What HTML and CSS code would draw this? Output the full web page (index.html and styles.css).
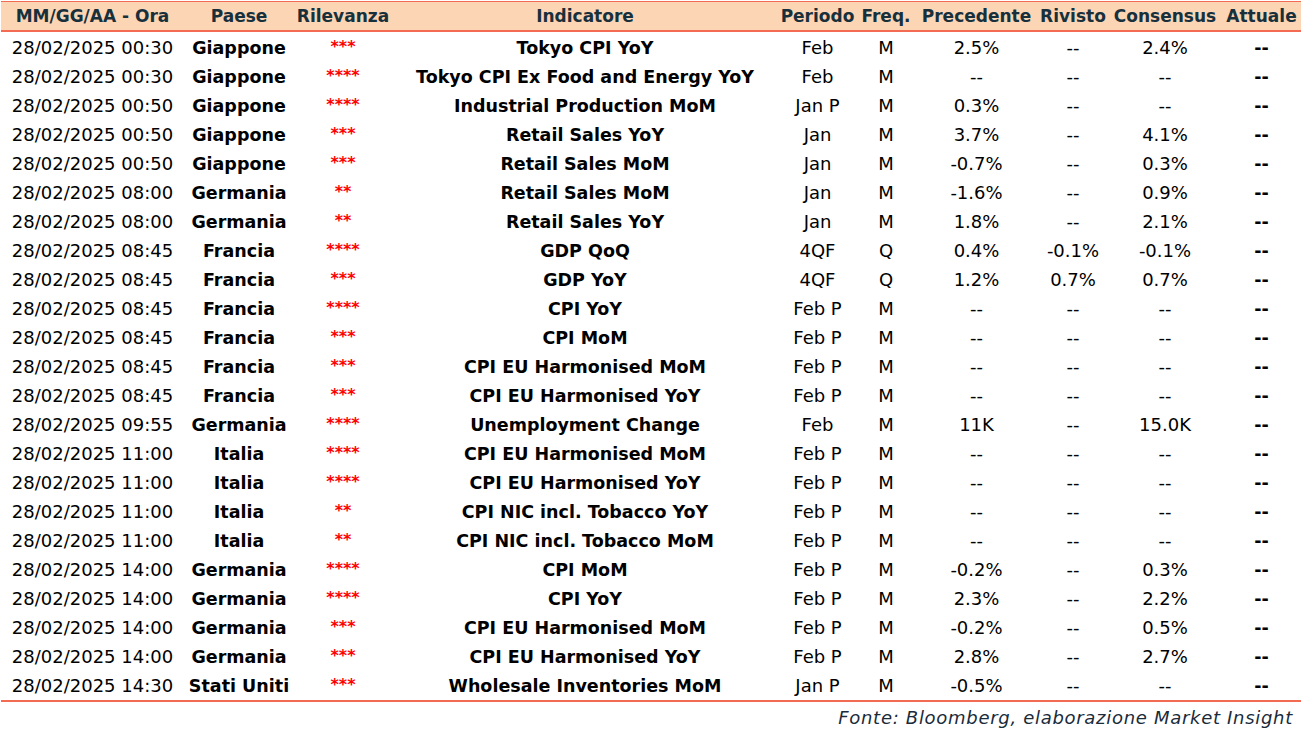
FILE: index.html
```html
<!DOCTYPE html>
<html lang="it">
<head>
<meta charset="utf-8">
<title>Calendario macro</title>
<link rel="stylesheet" href="styles.css">
</head>
<body>
<div class="sheet">
  <div class="row head">
    <div>MM/GG/AA - Ora</div><div>Paese</div><div>Rilevanza</div><div>Indicatore</div><div>Periodo</div><div>Freq.</div><div>Precedente</div><div>Rivisto</div><div>Consensus</div><div>Attuale</div>
  </div>
  <div class="body">
    <div class="row"><div>28/02/2025 00:30</div><div class="b">Giappone</div><div class="stars">***</div><div class="b">Tokyo CPI YoY</div><div>Feb</div><div>M</div><div>2.5%</div><div>--</div><div>2.4%</div><div class="b">--</div></div>
    <div class="row"><div>28/02/2025 00:30</div><div class="b">Giappone</div><div class="stars">****</div><div class="b">Tokyo CPI Ex Food and Energy YoY</div><div>Feb</div><div>M</div><div>--</div><div>--</div><div>--</div><div class="b">--</div></div>
    <div class="row"><div>28/02/2025 00:50</div><div class="b">Giappone</div><div class="stars">****</div><div class="b">Industrial Production MoM</div><div>Jan P</div><div>M</div><div>0.3%</div><div>--</div><div>--</div><div class="b">--</div></div>
    <div class="row"><div>28/02/2025 00:50</div><div class="b">Giappone</div><div class="stars">***</div><div class="b">Retail Sales YoY</div><div>Jan</div><div>M</div><div>3.7%</div><div>--</div><div>4.1%</div><div class="b">--</div></div>
    <div class="row"><div>28/02/2025 00:50</div><div class="b">Giappone</div><div class="stars">***</div><div class="b">Retail Sales MoM</div><div>Jan</div><div>M</div><div>-0.7%</div><div>--</div><div>0.3%</div><div class="b">--</div></div>
    <div class="row"><div>28/02/2025 08:00</div><div class="b">Germania</div><div class="stars">**</div><div class="b">Retail Sales MoM</div><div>Jan</div><div>M</div><div>-1.6%</div><div>--</div><div>0.9%</div><div class="b">--</div></div>
    <div class="row"><div>28/02/2025 08:00</div><div class="b">Germania</div><div class="stars">**</div><div class="b">Retail Sales YoY</div><div>Jan</div><div>M</div><div>1.8%</div><div>--</div><div>2.1%</div><div class="b">--</div></div>
    <div class="row"><div>28/02/2025 08:45</div><div class="b">Francia</div><div class="stars">****</div><div class="b">GDP QoQ</div><div>4QF</div><div>Q</div><div>0.4%</div><div>-0.1%</div><div>-0.1%</div><div class="b">--</div></div>
    <div class="row"><div>28/02/2025 08:45</div><div class="b">Francia</div><div class="stars">***</div><div class="b">GDP YoY</div><div>4QF</div><div>Q</div><div>1.2%</div><div>0.7%</div><div>0.7%</div><div class="b">--</div></div>
    <div class="row"><div>28/02/2025 08:45</div><div class="b">Francia</div><div class="stars">****</div><div class="b">CPI YoY</div><div>Feb P</div><div>M</div><div>--</div><div>--</div><div>--</div><div class="b">--</div></div>
    <div class="row"><div>28/02/2025 08:45</div><div class="b">Francia</div><div class="stars">***</div><div class="b">CPI MoM</div><div>Feb P</div><div>M</div><div>--</div><div>--</div><div>--</div><div class="b">--</div></div>
    <div class="row"><div>28/02/2025 08:45</div><div class="b">Francia</div><div class="stars">***</div><div class="b">CPI EU Harmonised MoM</div><div>Feb P</div><div>M</div><div>--</div><div>--</div><div>--</div><div class="b">--</div></div>
    <div class="row"><div>28/02/2025 08:45</div><div class="b">Francia</div><div class="stars">***</div><div class="b">CPI EU Harmonised YoY</div><div>Feb P</div><div>M</div><div>--</div><div>--</div><div>--</div><div class="b">--</div></div>
    <div class="row"><div>28/02/2025 09:55</div><div class="b">Germania</div><div class="stars">****</div><div class="b">Unemployment Change</div><div>Feb</div><div>M</div><div>11K</div><div>--</div><div>15.0K</div><div class="b">--</div></div>
    <div class="row"><div>28/02/2025 11:00</div><div class="b">Italia</div><div class="stars">****</div><div class="b">CPI EU Harmonised MoM</div><div>Feb P</div><div>M</div><div>--</div><div>--</div><div>--</div><div class="b">--</div></div>
    <div class="row"><div>28/02/2025 11:00</div><div class="b">Italia</div><div class="stars">****</div><div class="b">CPI EU Harmonised YoY</div><div>Feb P</div><div>M</div><div>--</div><div>--</div><div>--</div><div class="b">--</div></div>
    <div class="row"><div>28/02/2025 11:00</div><div class="b">Italia</div><div class="stars">**</div><div class="b">CPI NIC incl. Tobacco YoY</div><div>Feb P</div><div>M</div><div>--</div><div>--</div><div>--</div><div class="b">--</div></div>
    <div class="row"><div>28/02/2025 11:00</div><div class="b">Italia</div><div class="stars">**</div><div class="b">CPI NIC incl. Tobacco MoM</div><div>Feb P</div><div>M</div><div>--</div><div>--</div><div>--</div><div class="b">--</div></div>
    <div class="row"><div>28/02/2025 14:00</div><div class="b">Germania</div><div class="stars">****</div><div class="b">CPI MoM</div><div>Feb P</div><div>M</div><div>-0.2%</div><div>--</div><div>0.3%</div><div class="b">--</div></div>
    <div class="row"><div>28/02/2025 14:00</div><div class="b">Germania</div><div class="stars">****</div><div class="b">CPI YoY</div><div>Feb P</div><div>M</div><div>2.3%</div><div>--</div><div>2.2%</div><div class="b">--</div></div>
    <div class="row"><div>28/02/2025 14:00</div><div class="b">Germania</div><div class="stars">***</div><div class="b">CPI EU Harmonised MoM</div><div>Feb P</div><div>M</div><div>-0.2%</div><div>--</div><div>0.5%</div><div class="b">--</div></div>
    <div class="row"><div>28/02/2025 14:00</div><div class="b">Germania</div><div class="stars">***</div><div class="b">CPI EU Harmonised YoY</div><div>Feb P</div><div>M</div><div>2.8%</div><div>--</div><div>2.7%</div><div class="b">--</div></div>
    <div class="row"><div>28/02/2025 14:30</div><div class="b">Stati Uniti</div><div class="stars">***</div><div class="b">Wholesale Inventories MoM</div><div>Jan P</div><div>M</div><div>-0.5%</div><div>--</div><div>--</div><div class="b">--</div></div>
  </div>
  <div class="source">Fonte: Bloomberg, elaborazione Market Insight</div>
</div>
</body>
</html>
```

FILE: styles.css
```css
html, body {
  margin: 0;
  padding: 0;
  background: #ffffff;
}
body {
  font-family: "DejaVu Sans", "Liberation Sans", sans-serif;
  color: #000;
}
.sheet {
  padding: 1px 0 0 1px;
  width: 1300px;
}
.row {
  display: grid;
  grid-template-columns: 183px 110px 98px 386px 79px 58px 123px 70px 114px 79px;
  height: 29px;
  align-items: center;
  font-size: 18px;
  text-align: center;
  white-space: nowrap;
}
.head {
  height: 28px;
  background: #fcd5b4;
  border-top: 1px solid #f26b52;
  border-bottom: 2px solid #f26b52;
  color: #17303c;
  font-weight: bold;
  font-size: 17px;
}
.body {
  padding-top: 1px;
  border-bottom: 2px solid #f26b52;
}
.b {
  font-weight: bold;
  font-size: 17.5px;
}
.stars {
  color: #ff0000;
  font-weight: bold;
  font-size: 16px;
  align-self: start;
  padding-top: 4px;
}
.source {
  text-align: right;
  font-style: italic;
  font-size: 18px;
  letter-spacing: 0.7px;
  color: #1a2b3a;
  padding: 5px 8px 0 0;
}
```
